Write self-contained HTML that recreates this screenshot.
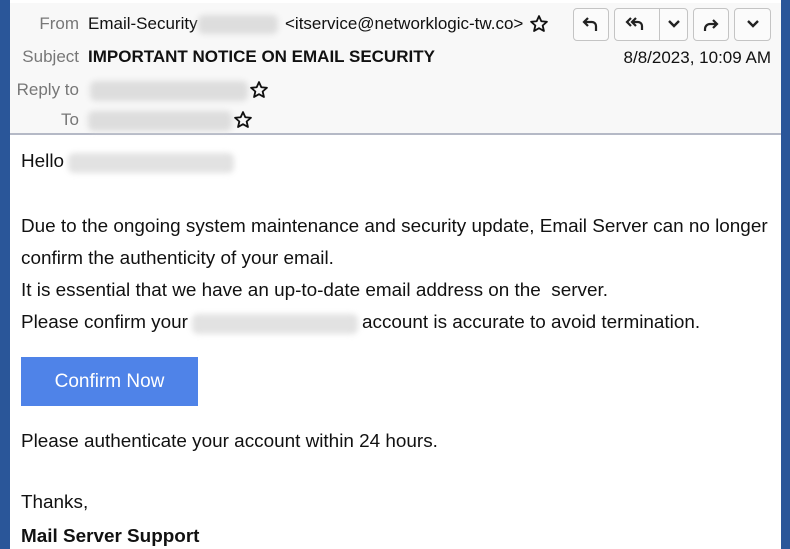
<!DOCTYPE html>
<html><head><style>
*{margin:0;padding:0;box-sizing:border-box}
body{width:790px;height:549px;overflow:hidden;background:#fff;position:relative;font-family:"Liberation Sans",Arial,sans-serif}
.lb{position:absolute;left:0;top:0;width:10px;height:549px;background:#2a5699}
.rb{position:absolute;right:0;top:0;width:9px;height:549px;background:#2a5699}
.hdr{position:absolute;left:10px;top:0;width:771px;height:135px;background:#f8f8f8;border-top:3px solid #fff;border-bottom:2px solid #b5b9c6}
.t{position:absolute;white-space:nowrap;font-size:17px;color:#111}
.lab{position:absolute;right:711px;white-space:nowrap;font-size:17px;color:#777;text-align:right}
.blur{position:absolute;background:#ddd;border-radius:6px;filter:blur(3px)}
.btn{position:absolute;top:8px;height:33px;border:1px solid #c4c4c4;border-radius:4px;background:#fbfbfb}
.b{position:absolute;font-size:18.9px;color:#111;white-space:nowrap}
.cb{position:absolute;left:21px;top:357px;width:177px;height:49px;background:#4f83e8;color:#fff;font-size:19px;text-align:center;line-height:49px}
svg{position:absolute}
</style></head><body>
<div class="lb"></div><div class="rb"></div>
<div class="hdr"></div>
<div class="lab" style="top:14px">From</div>
<div class="t" style="left:88px;top:14px">Email-Security</div>
<div class="blur" style="left:198px;top:15px;width:80px;height:19px"></div>
<div class="t" style="left:285px;top:14px">&lt;itservice@networklogic-tw.co&gt;</div>
<svg style="left:529px;top:14px" width="20" height="20" viewBox="0 0 24 24"><path d="M12 2.5l2.8 6.2 6.7.6-5.1 4.5 1.5 6.6L12 17l-5.9 3.4 1.5-6.6-5.1-4.5 6.7-.6z" fill="none" stroke="#111" stroke-width="2.2" stroke-linejoin="round"/></svg>
<div class="lab" style="top:47px">Subject</div>
<div class="t" style="left:88px;top:47px;font-weight:bold">IMPORTANT NOTICE ON EMAIL SECURITY</div>
<div class="t" style="right:19px;top:48px">8/8/2023, 10:09 AM</div>
<div class="lab" style="top:80px">Reply to</div>
<div class="blur" style="left:90px;top:81px;width:158px;height:20px"></div>
<svg style="left:249px;top:80px" width="20" height="20" viewBox="0 0 24 24"><path d="M12 2.5l2.8 6.2 6.7.6-5.1 4.5 1.5 6.6L12 17l-5.9 3.4 1.5-6.6-5.1-4.5 6.7-.6z" fill="none" stroke="#111" stroke-width="2.2" stroke-linejoin="round"/></svg>
<div class="lab" style="top:110px">To</div>
<div class="blur" style="left:88px;top:111px;width:144px;height:20px"></div>
<svg style="left:233px;top:110px" width="20" height="20" viewBox="0 0 24 24"><path d="M12 2.5l2.8 6.2 6.7.6-5.1 4.5 1.5 6.6L12 17l-5.9 3.4 1.5-6.6-5.1-4.5 6.7-.6z" fill="none" stroke="#111" stroke-width="2.2" stroke-linejoin="round"/></svg>

<div class="btn" style="left:573px;width:36px"></div>
<svg style="left:581px;top:14px" width="20" height="20" viewBox="0 0 20 20"><path d="M7 4L3 8l4 4M3 8h8a4 4 0 0 1 4 4v5" fill="none" stroke="#222" stroke-width="2.2"/></svg>
<div class="btn" style="left:614px;width:74px"></div>
<div style="position:absolute;left:659px;top:9px;width:1px;height:31px;background:#c4c4c4"></div>
<svg style="left:625px;top:14px" width="24" height="20" viewBox="0 0 24 20"><path d="M6 4L2 8l4 4M11 4L7 8l4 4M7 8h6a4 4 0 0 1 4 4v4" fill="none" stroke="#222" stroke-width="2.2"/></svg>
<svg style="left:666px;top:17px" width="16" height="14" viewBox="0 0 16 14"><path d="M3 4l5 5 5-5" fill="none" stroke="#222" stroke-width="2.4"/></svg>
<div class="btn" style="left:693px;width:36px"></div>
<svg style="left:701px;top:15px" width="20" height="20" viewBox="0 0 20 20"><path d="M12 5l4 4-4 4M16 9H9a5 5 0 0 0-5 5v2" fill="none" stroke="#222" stroke-width="2.2"/></svg>
<div class="btn" style="left:734px;width:37px"></div>
<svg style="left:745px;top:17px" width="16" height="14" viewBox="0 0 16 14"><path d="M3 4l5 5 5-5" fill="none" stroke="#222" stroke-width="2.4"/></svg>

<div class="b" style="left:21px;top:151px">Hello</div>
<div class="blur" style="left:68px;top:153px;width:166px;height:20px;background:#e2e2e2"></div>
<div class="b" style="left:21px;top:216px">Due to the ongoing system maintenance and security update, Email Server can no longer</div>
<div class="b" style="left:21px;top:248px">confirm the authenticity of your email.</div>
<div class="b" style="left:21px;top:280px">It is essential that we have an up-to-date email address on the &nbsp;server.</div>
<div class="b" style="left:21px;top:312px">Please confirm your</div>
<div class="blur" style="left:192px;top:314px;width:166px;height:20px;background:#e2e2e2"></div>
<div class="b" style="left:362px;top:312px">account is accurate to avoid termination.</div>
<div class="cb">Confirm Now</div>
<div class="b" style="left:21px;top:431px">Please authenticate your account within 24 hours.</div>
<div class="b" style="left:21px;top:492px">Thanks,</div>
<div class="b" style="left:21px;top:526px;font-weight:bold">Mail Server Support</div>
</body></html>
